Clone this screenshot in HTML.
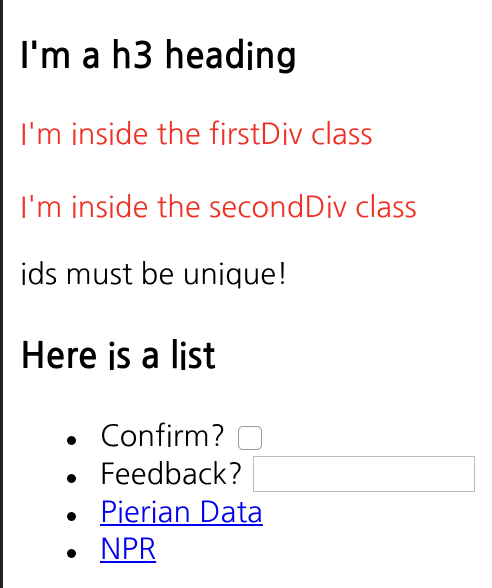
<!DOCTYPE html>
<html><head><style>
html,body{margin:0;padding:0;width:492px;height:588px;background:#fff;overflow:hidden;font-family:"NanumGothic","Liberation Sans",sans-serif;}
body{border-left:3px solid #222;box-sizing:border-box;}
.t{position:absolute;left:20px;white-space:nowrap;line-height:38px;font-size:29.2px;color:#000;}
.h{font-weight:bold;font-size:35.5px;}
.r{color:#ee3124;}
.li{left:100px;}
.dot{position:absolute;left:67px;width:9px;height:9px;border-radius:50%;background:#000;}
a{color:#0000ee;text-decoration:underline;}
.cb{display:inline-block;width:24px;height:24px;border:1px solid #999;border-radius:5px;vertical-align:-4px;margin-left:12px;box-sizing:border-box;}
.in{display:inline-block;width:222px;height:36px;border:1px solid #bbb;vertical-align:-8px;margin-left:10px;box-sizing:border-box;}
</style></head><body>
<div class="t h" style="top:38px">I'm a h3 heading</div>
<div class="t r" style="top:116px">I'm inside the firstDiv class</div>
<div class="t r" style="top:189px">I'm inside the secondDiv class</div>
<div class="t" style="top:256px">ids must be unique!</div>
<div class="t h" style="top:338px">Here is a list</div>
<div class="dot" style="top:436px"></div>
<div class="t li" style="top:418px">Confirm?<span class="cb"></span></div>
<div class="dot" style="top:474px"></div>
<div class="t li" style="top:456px">Feedback?<span class="in"></span></div>
<div class="dot" style="top:512px"></div>
<div class="t li" style="top:494px"><a>Pierian Data</a></div>
<div class="dot" style="top:549px"></div>
<div class="t li" style="top:531px"><a>NPR</a></div>
</body></html>
